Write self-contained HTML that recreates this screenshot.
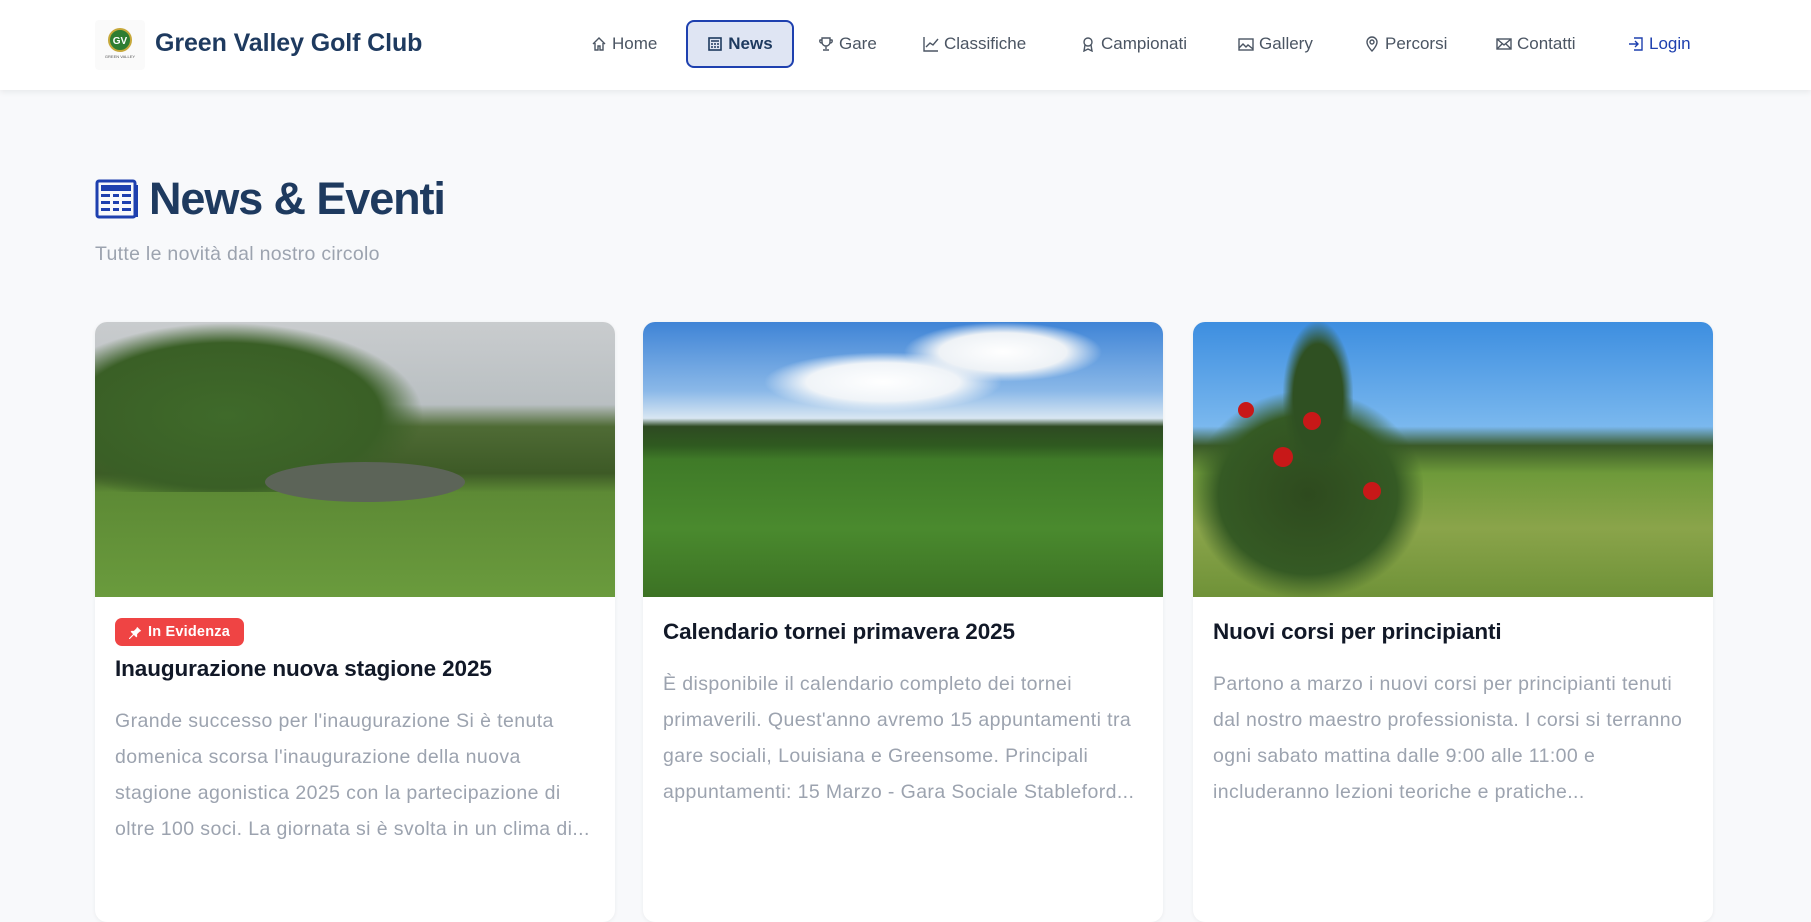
<!DOCTYPE html>
<html><head><meta charset="utf-8"><style>
*{box-sizing:border-box;margin:0;padding:0}
body{width:1811px;height:874px;overflow:hidden;background:#f8f9fb;font-family:"Liberation Sans",sans-serif}
.hdr{position:absolute;left:0;top:0;width:1811px;height:90px;background:#fff;box-shadow:0 2px 6px rgba(0,0,0,.07)}
.logo{position:absolute;left:95px;top:20px;width:50px;height:50px;background:#fafafa;border-radius:4px}
.brand{position:absolute;left:155px;top:29px;font-size:25px;font-weight:bold;color:#1e3a5f;letter-spacing:-.1px}
.nav{position:absolute;top:20px;height:48px;display:flex;align-items:center;font-size:17px;color:#4b5563;gap:5px}
.nav svg{width:16px;height:16px;fill:none;stroke:currentColor;stroke-width:1.4}
.active{left:686px;width:108px;border:2px solid #1e40af;border-radius:8px;background:#dfe5f3;color:#1e3a5f;font-weight:bold;justify-content:center}
h1{position:absolute;left:149px;top:173px;font-size:45px;color:#1e3a5f;letter-spacing:-1.1px}
.sub{position:absolute;left:95px;top:243px;font-size:19.5px;color:#9ca3af;letter-spacing:.3px}
.card{position:absolute;top:322px;width:520px;height:600px;background:#fff;border-radius:12px;overflow:hidden;box-shadow:0 1px 4px rgba(0,0,0,.06)}
.img{height:275px;position:relative;overflow:hidden}
.body{padding:0 20px}
.badge{display:inline-flex;align-items:center;gap:6px;margin-top:21px;background:#ef4444;color:#fff;font-size:14.5px;font-weight:bold;padding:6px 14px 6px 14px;border-radius:7px;letter-spacing:.2px}
.t{font-size:22.5px;font-weight:bold;color:#111827;margin-top:10px;letter-spacing:-.1px}
.p{font-size:19.5px;line-height:36px;color:#9ca3af;margin-top:21px;letter-spacing:.4px}
</style></head><body>
<div class="hdr">
<div class="logo"><svg width="50" height="50"><circle cx="25" cy="20" r="11" fill="#2e7d32"/><circle cx="25" cy="20" r="11" fill="none" stroke="#c6a83a" stroke-width="2"/><text x="25" y="24" font-size="10" font-weight="bold" fill="#fff" text-anchor="middle" font-family="Liberation Sans">GV</text><text x="25" y="38" font-size="4" fill="#555" text-anchor="middle" font-family="Liberation Sans">GREEN VALLEY</text></svg></div>
<div class="brand">Green Valley Golf Club</div>
<div class="nav" style="left:591px"><svg viewBox="0 0 16 16"><path d="M2 8 8 2l6 6M4 7v7h3v-4h2v4h3V7"/></svg>Home</div>
<div class="nav active"><svg viewBox="0 0 16 16" style="stroke-width:1.6"><rect x="2" y="2" width="12" height="12"/><path d="M4 5h8M4 8h2M7 8h2M10 8h2M4 11h2M7 11h2M10 11h2"/></svg>News</div>
<div class="nav" style="left:818px"><svg viewBox="0 0 16 16"><path d="M4 2h8v4a4 4 0 0 1-8 0zM4 4H2a2 2 0 0 0 2 3M12 4h2a2 2 0 0 1-2 3M8 10v3M5 14h6"/></svg>Gare</div>
<div class="nav" style="left:923px"><svg viewBox="0 0 16 16"><path d="M1 1v14h14M3 11l4-4 3 2 5-6"/></svg>Classifiche</div>
<div class="nav" style="left:1080px"><svg viewBox="0 0 16 16"><circle cx="8" cy="6" r="4"/><path d="M5 9l-1 6 4-2 4 2-1-6"/></svg>Campionati</div>
<div class="nav" style="left:1238px"><svg viewBox="0 0 16 16"><rect x="1" y="3" width="14" height="11"/><path d="M1 12l4-4 3 3 2-2 5 4"/></svg>Gallery</div>
<div class="nav" style="left:1364px"><svg viewBox="0 0 16 16"><path d="M8 15s5-5 5-9a5 5 0 0 0-10 0c0 4 5 9 5 9z"/><circle cx="8" cy="6" r="2"/></svg>Percorsi</div>
<div class="nav" style="left:1496px"><svg viewBox="0 0 16 16"><rect x="1" y="3" width="14" height="10"/><path d="M1 3l7 6 7-6M1 13l5-5M15 13l-5-5"/></svg>Contatti</div>
<div class="nav" style="left:1628px;color:#1e40af"><svg viewBox="0 0 16 16"><path d="M6 2h8v12H6M1 8h9M7 5l3 3-3 3"/></svg>Login</div>
</div>
<svg style="position:absolute;left:95px;top:179px" width="45" height="40" viewBox="0 0 45 40"><rect x="2" y="2" width="38" height="36" rx="2" fill="none" stroke="#1e40af" stroke-width="3"/><rect x="40" y="6" width="3" height="32" fill="#1e40af"/><rect x="6" y="6" width="30" height="6" fill="#1e40af"/><g fill="#1e40af"><rect x="6" y="15" width="9" height="3"/><rect x="18" y="15" width="6" height="3"/><rect x="27" y="15" width="9" height="3"/><rect x="6" y="22" width="9" height="3"/><rect x="18" y="22" width="6" height="3"/><rect x="27" y="22" width="9" height="3"/><rect x="6" y="29" width="9" height="3"/><rect x="18" y="29" width="6" height="3"/><rect x="27" y="29" width="9" height="3"/></g></svg>
<h1>News &amp; Eventi</h1>
<div class="sub">Tutte le novità dal nostro circolo</div>

<div class="card" style="left:95px">
<div class="img" style="background:linear-gradient(#c9ccce 0%,#b9bfc2 30%,#4f6b35 38%,#3d5a26 55%,#5d8a35 62%,#6a9b3d 100%)">
<div style="position:absolute;left:0;top:0;width:330px;height:170px;background:radial-gradient(ellipse at 40% 55%,#3f6a2a 0%,#3a5f26 55%,transparent 70%)"></div>
<div style="position:absolute;left:170px;top:140px;width:200px;height:40px;background:#5c6458;border-radius:50%"></div>
</div>
<div class="body"><span class="badge"><svg width="13" height="13" viewBox="0 0 16 16"><path d="M10 1l5 5-2 1-3 3 0 3-1 1-3-3-5 5-1 0 0-1 5-5-3-3 1-1 3 0 3-3z" fill="#fff"/></svg>In Evidenza</span>
<div class="t">Inaugurazione nuova stagione 2025</div>
<div class="p">Grande successo per l'inaugurazione Si è tenuta domenica scorsa l'inaugurazione della nuova stagione agonistica 2025 con la partecipazione di oltre 100 soci. La giornata si è svolta in un clima di...</div></div>
</div>

<div class="card" style="left:643px">
<div class="img" style="background:linear-gradient(#3f84d6 0%,#8ab8e8 25%,#d8e6f2 35%,#2e4a22 38%,#2f5a20 45%,#3f7a28 50%,#4a8a2e 75%,#3c7224 100%)">
<div style="position:absolute;left:120px;top:30px;width:240px;height:60px;background:radial-gradient(ellipse,#fff 0%,#f0f4f8 45%,transparent 70%)"></div>
<div style="position:absolute;left:260px;top:0;width:200px;height:60px;background:radial-gradient(ellipse,#fff 0%,#eef2f6 45%,transparent 70%)"></div>
</div>
<div class="body">
<div class="t" style="margin-top:22px">Calendario tornei primavera 2025</div>
<div class="p">È disponibile il calendario completo dei tornei primaverili. Quest'anno avremo 15 appuntamenti tra gare sociali, Louisiana e Greensome. Principali appuntamenti: 15 Marzo - Gara Sociale Stableford...</div></div>
</div>

<div class="card" style="left:1193px">
<div class="img" style="background:linear-gradient(#3d8ee0 0%,#7ab8ee 38%,#3a5a28 45%,#6e9a3a 55%,#8aa44a 75%,#6f9238 100%)">
<div style="position:absolute;left:0;top:70px;width:230px;height:205px;background:radial-gradient(ellipse,#2e4a1e 0%,#355a24 55%,transparent 72%)"></div>
<div style="position:absolute;left:90px;top:0;width:70px;height:150px;background:radial-gradient(ellipse,#2f5022 0%,#2f5022 50%,transparent 72%)"></div>
<div style="position:absolute;left:45px;top:80px;width:16px;height:16px;border-radius:50%;background:#c81818"></div>
<div style="position:absolute;left:80px;top:125px;width:20px;height:20px;border-radius:50%;background:#c81818"></div>
<div style="position:absolute;left:110px;top:90px;width:18px;height:18px;border-radius:50%;background:#c81818"></div>
<div style="position:absolute;left:170px;top:160px;width:18px;height:18px;border-radius:50%;background:#c81818"></div>
</div>
<div class="body">
<div class="t" style="margin-top:22px">Nuovi corsi per principianti</div>
<div class="p">Partono a marzo i nuovi corsi per principianti tenuti dal nostro maestro professionista. I corsi si terranno ogni sabato mattina dalle 9:00 alle 11:00 e includeranno lezioni teoriche e pratiche...</div></div>
</div>
</body></html>
